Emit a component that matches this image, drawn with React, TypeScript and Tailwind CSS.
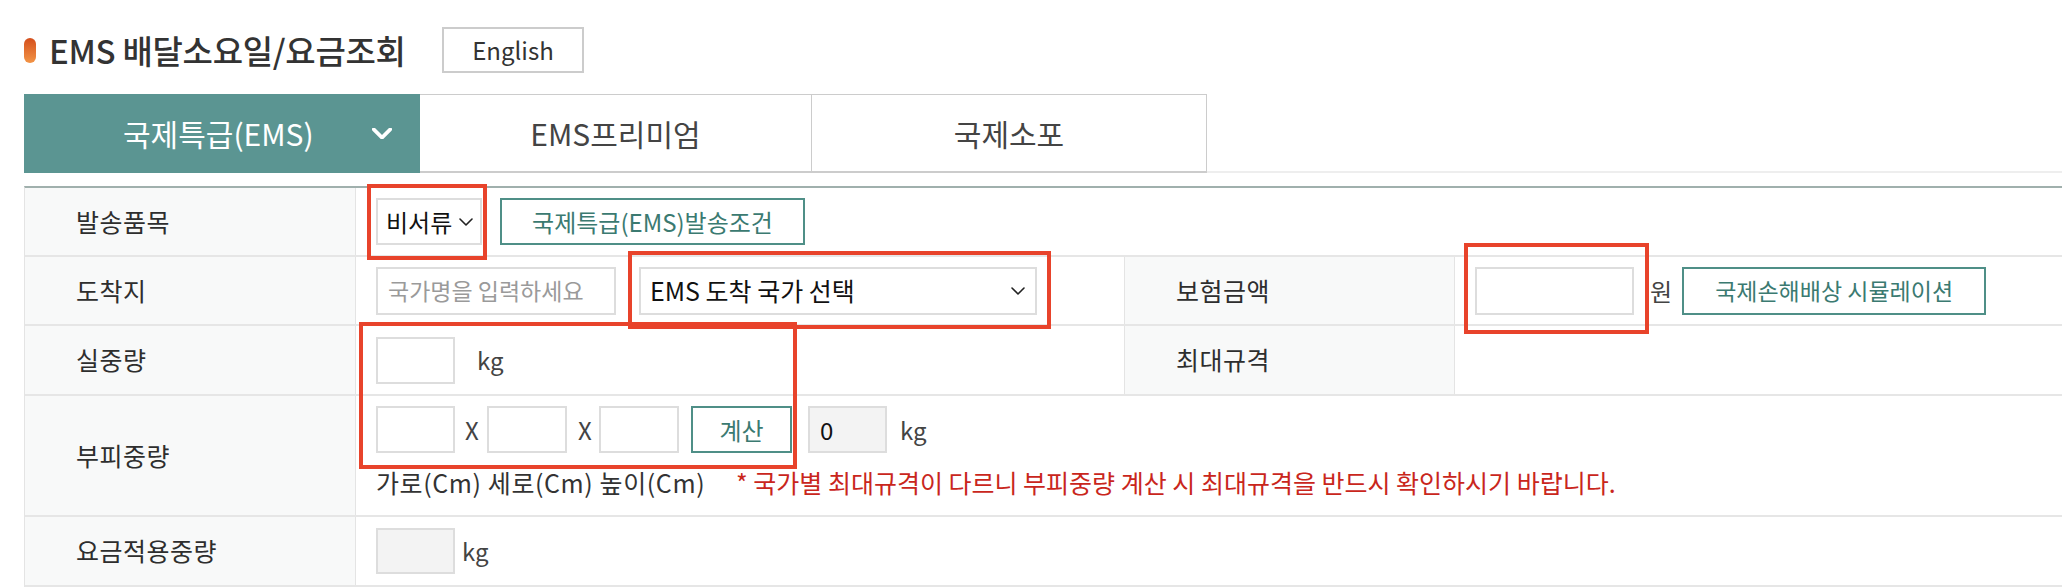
import React from 'react';

const inputBox = 'h-[47px] border-2 border-[#dddddd] bg-white';
const tealBtn = 'h-[47px] border-2 border-[#4f8f87] bg-white text-[#3b7a71] flex items-center justify-center';

const Chevron: React.FC<{ className?: string; stroke?: string; width?: number }> = ({ className, stroke = '#222', width = 1.6 }) => (
  <svg className={className} viewBox="0 0 14 8" fill="none" stroke={stroke} strokeWidth={width} strokeLinecap="round" strokeLinejoin="round">
    <path d="M1 1l6 6 6-6" />
  </svg>
);

const Label: React.FC<{ children: React.ReactNode; className?: string }> = ({ children, className = '' }) => (
  <div className={`w-[331px] shrink-0 bg-[#f8f9f9] border-r border-[#e4e4e4] flex items-center pl-[51px] text-[25px] tracking-[0.5px] text-[#2e2e2e] ${className}`}>
    {children}
  </div>
);

const App: React.FC = () => {
  return <div className="relative w-[2062px] h-[588px] overflow-hidden bg-white pl-[24px] font-['Noto_Sans_CJK_KR','Noto_Sans',sans-serif] text-[#333]">
      {/* title */}
      <div className="flex items-center h-[46px] mt-[27px]">
        <span className="w-[12px] h-[25px] rounded-full bg-gradient-to-b from-[#d44e1c] to-[#f29446]" />
        <h1 className="ml-[13px] w-[364px] text-[33px] font-medium text-[#333] leading-none tracking-[-0.3px] whitespace-nowrap">EMS 배달소요일/요금조회</h1>
        <button className="ml-[29px] w-[142px] h-[46px] border-2 border-[#cccccc] text-[24px] text-[#333] flex items-center justify-center">
          English
        </button>
      </div>

      {/* tabs */}
      <div className="flex h-[79px] mt-[21px]">
        <div className="w-[396px] bg-[#5b9592] flex items-center pl-[99px] pr-[28px] text-white text-[30px]">
          <span>국제특급(EMS)</span>
          <Chevron className="ml-auto w-[20px] h-[11px]" stroke="#ffffff" width={2.6} />
        </div>
        <div className="w-[392px] border-t border-r border-b-2 border-[#cccccc] flex items-center justify-center text-[30px] text-[#444]">
          EMS프리미엄
        </div>
        <div className="w-[395px] border-t border-r border-b-2 border-[#cccccc] flex items-center justify-center text-[30px] text-[#444]">
          국제소포
        </div>
        <div className="flex-1 border-b-2 border-[#eeeeee]" />
      </div>

      {/* table */}
      <div className="mt-[13px] border-t-2 border-[#a0b0ad] border-l border-l-[#e4e4e4]">
        {/* 발송품목 */}
        <div className="flex h-[69px] border-b-2 border-[#e6e6e6]">
          <Label>발송품목</Label>
          <div className="flex items-center pl-[20px]">
            <div className={`${inputBox} w-[106px] flex items-center pl-[8px] pr-[7px] text-[24px] text-[#111]`}>
              <span>비서류</span>
              <Chevron className="ml-auto w-[14px] h-[8px]" />
            </div>
            <button className={`${tealBtn} ml-[18px] w-[305px] text-[24px]`}>국제특급(EMS)발송조건</button>
          </div>
        </div>

        {/* 도착지 / 보험금액 */}
        <div className="flex h-[69px] border-b-2 border-[#e6e6e6]">
          <Label>도착지</Label>
          <div className="w-[768px] shrink-0 flex items-center pl-[20px]">
            <div className={`${inputBox} w-[240px] h-[48px] flex items-center pl-[10px] text-[23px] text-[#9a9a9a] whitespace-nowrap overflow-hidden`}>국가명을 입력하세요</div>
            <div className={`${inputBox} ml-[23px] w-[398px] h-[48px] flex items-center pl-[9px] pr-[10px] text-[25px] text-[#111]`}>
              <span>EMS 도착 국가 선택</span>
              <Chevron className="ml-auto w-[14px] h-[8px]" />
            </div>
          </div>
          <Label className="border-l">보험금액</Label>
          <div className="flex items-center pl-[20px]">
            <div className={`${inputBox} w-[159px] h-[48px]`} />
            <span className="ml-[16px] text-[24px] text-[#444]">원</span>
            <button className={`${tealBtn} ml-[10px] w-[304px] h-[48px] text-[23px]`}>국제손해배상 시뮬레이션</button>
          </div>
        </div>

        {/* 실중량 / 최대규격 */}
        <div className="flex h-[70px] border-b-2 border-[#e6e6e6]">
          <Label>실중량</Label>
          <div className="w-[768px] shrink-0 flex items-center pl-[20px]">
            <div className={`${inputBox} w-[79px]`} />
            <span className="ml-[22px] text-[24px] text-[#444]">kg</span>
          </div>
          <Label className="border-l">최대규격</Label>
          <div className="flex-1" />
        </div>

        {/* 부피중량 */}
        <div className="flex h-[121px] border-b-2 border-[#e6e6e6]">
          <Label>부피중량</Label>
          <div className="flex flex-col pl-[20px] pt-[10px]">
            <div className="flex items-center text-[24px] text-[#444]">
              <div className={`${inputBox} w-[79px]`} />
              <span className="w-[32px] pl-[10px]">X</span>
              <div className={`${inputBox} w-[80px]`} />
              <span className="w-[32px] pl-[11px]">X</span>
              <div className={`${inputBox} w-[80px]`} />
              <button className={`${tealBtn} ml-[12px] w-[101px] text-[24px]`}>계산</button>
              <div className="ml-[16px] w-[79px] h-[47px] border-2 border-[#dddddd] bg-[#f3f3f3] flex items-center pl-[10px] text-[24px] text-[#111]">0</div>
              <span className="ml-[13px]">kg</span>
            </div>
            <div className="flex items-center mt-[14px] text-[25px] leading-[30px] whitespace-nowrap">
              <span className="w-[360px] text-[#333] tracking-[0.6px]">가로(Cm) 세로(Cm) 높이(Cm)</span>
              <span className="text-[#c9261c]">* 국가별 최대규격이 다르니 부피중량 계산 시 최대규격을 반드시 확인하시기 바랍니다.</span>
            </div>
          </div>
        </div>

        {/* 요금적용중량 */}
        <div className="flex h-[70px] border-b-2 border-[#e6e6e6]">
          <Label>요금적용중량</Label>
          <div className="flex items-center pl-[20px]">
            <div className="w-[79px] h-[46px] border-2 border-[#dddddd] bg-[#f3f3f3]" />
            <span className="ml-[7px] text-[24px] text-[#444]">kg</span>
          </div>
        </div>
      </div>

      {/* red annotation boxes */}
      <div className="absolute left-[367px] top-[184px] w-[120px] h-[76px] border-4 border-[#e8432b] pointer-events-none" />
      <div className="absolute left-[628px] top-[251px] w-[423px] h-[78px] border-4 border-[#e8432b] pointer-events-none" />
      <div className="absolute left-[1464px] top-[243px] w-[185px] h-[91px] border-4 border-[#e8432b] pointer-events-none" />
      <div className="absolute left-[359px] top-[322px] w-[438px] h-[147px] border-4 border-[#e8432b] pointer-events-none" />
    </div>;
};

export default App;
